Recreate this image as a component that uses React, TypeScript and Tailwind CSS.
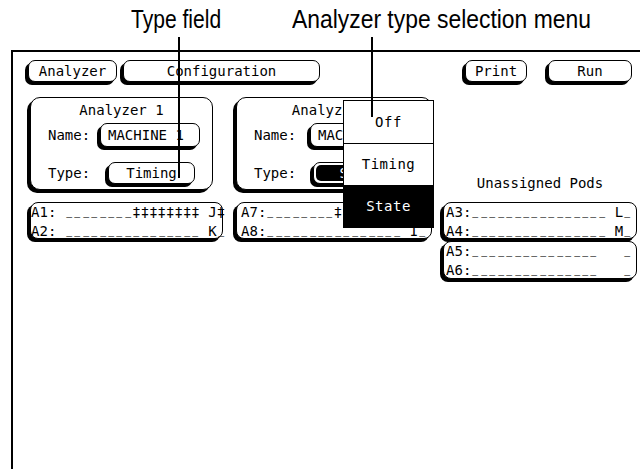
const shell = "border border-black bg-white shadow-[-3px_3px_0_0_#000]";

// underscores on the instrument font are short dashes sitting on the baseline
function Dashed({ text }: { text: string }) {
  return (
    <>
      {text.split("").map((c, i) =>
        c === "_" ? (
          <span key={i} className="inline-block scale-x-[0.7] -translate-y-[3px]">
            _
          </span>
        ) : (
          <span key={i}>{c}</span>
        )
      )}
    </>
  );
}

function Btn({ label, className }: { label: string; className: string }) {
  return (
    <div className={`${shell} rounded-[7px] h-[22px] flex items-center justify-center ${className}`}>
      {label}
    </div>
  );
}

function PodBox({ rows, className }: { rows: string[]; className: string }) {
  return (
    <div className={`${shell} rounded-[8px] leading-[19px] whitespace-pre ${className}`}>
      {rows.map((r) => (
        <div key={r}>
          <Dashed text={r} />
        </div>
      ))}
    </div>
  );
}

function AnalyzerBox({
  title,
  name,
  type,
  selected,
  className,
  nameW,
  typeW,
  nameGap,
  typeGap,
}: {
  title: string;
  name: string;
  type: string;
  selected?: boolean;
  className: string;
  nameW: string;
  typeW: string;
  nameGap: string;
  typeGap: string;
}) {
  return (
    <div className={`${shell} rounded-[10px] h-[93px] pt-[4px] ${className}`}>
      <div className="text-center leading-[16px]">{title}</div>
      <div className="flex items-center mt-[5px] pl-[17px]">
        <span className={nameGap}>Name:</span>
        <div className={`${shell} rounded-[7px] h-[24px] flex items-center pl-[7px] ${nameW}`}>{name}</div>
      </div>
      <div className="flex items-center mt-[15px] pl-[17px]">
        <span className={typeGap}>Type:</span>
        {selected ? (
          <div className={`${shell} rounded-[7px] h-[22px] p-[2px] ${typeW}`}>
            <div className="h-full bg-black text-white rounded-[5px] flex items-center justify-center">{type}</div>
          </div>
        ) : (
          <div className={`${shell} rounded-[7px] h-[22px] flex items-center justify-center ${typeW}`}>{type}</div>
        )}
      </div>
    </div>
  );
}

export default function App() {
  return (
    <div className="relative w-[640px] h-[469px] overflow-hidden bg-white text-black">
      {/* callout captions */}
      <div className="h-[50px] flex items-start pt-[6px] text-[26px] leading-none whitespace-nowrap font-['Liberation_Sans',Arial,sans-serif]">
        <div className="ml-[131px] w-[161px]">
          <span className="inline-block origin-left scale-x-[0.81]">Type field</span>
        </div>
        <div>
          <span className="inline-block origin-left scale-x-[0.88]">Analyzer type selection menu</span>
        </div>
      </div>

      {/* instrument screen */}
      <div className="ml-[11px] h-[419px] border-l-2 border-t-2 border-black text-[14px] font-['DejaVu_Sans_Mono',monospace]">
        <div className="flex pt-[8px]">
          <Btn label="Analyzer" className="ml-[15px] w-[89px]" />
          <Btn label="Configuration" className="ml-[6px] w-[197px]" />
          <Btn label="Print" className="ml-[145px] w-[62px]" />
          <Btn label="Run" className="ml-[21px] w-[84px]" />
        </div>

        <div className="flex mt-[15px]">
          <AnalyzerBox
            title="Analyzer 1"
            name="MACHINE 1"
            type="Timing"
            className="ml-[17px] w-[183px]"
            nameW="w-[100px]"
            typeW="w-[87px]"
            nameGap="w-[52px]"
            typeGap="w-[60px]"
          />
          <AnalyzerBox
            title="Analyzer 2"
            name="MACHINE 2"
            type="State"
            selected
            className="ml-[23px] w-[196px]"
            nameW="w-[110px]"
            typeW="w-[95px]"
            nameGap="w-[56px]"
            typeGap="w-[59px]"
          />
          <div className="ml-[11px] w-[194px] self-end text-center leading-[16px] mb-[-1px]">Unassigned Pods</div>
        </div>

        <div className="flex items-start mt-[12px]">
          <PodBox
            rows={["A1: ________‡‡‡‡‡‡‡‡ J‡", "A2: ________________ K_"]}
            className="ml-[17px] w-[193px] h-[37px]"
          />
          <PodBox
            rows={["A7:________‡‡‡‡‡‡‡‡ I‡", "A8:________________ I_"]}
            className="ml-[13px] w-[196px] h-[37px] pl-[4px]"
          />
          <div className="ml-[11px] w-[194px] flex flex-col gap-[2px]">
            <PodBox rows={["A3:________________ L_", "A4:________________ M_"]} className="h-[37px] pl-[2px]" />
            <PodBox rows={["A5:_______________   _", "A6:_______________   _"]} className="h-[38px] pl-[2px]" />
          </div>
        </div>
      </div>

      {/* type selection pop-up */}
      <div className="absolute left-[343px] top-[100px] w-[91px] border border-black bg-white flex flex-col text-[14px] tracking-[0.5px] font-['DejaVu_Sans_Mono',monospace]">
        <div className="h-[42px] flex items-center justify-center">Off</div>
        <div className="h-[42px] border-t border-black flex items-center justify-center">Timing</div>
        <div className="h-[42px] bg-black text-white flex items-center justify-center">State</div>
      </div>

      {/* callout leader lines */}
      <div className="absolute left-[178px] top-[37px] w-[2px] h-[141px] bg-black" />
      <div className="absolute left-[371px] top-[37px] w-[2px] h-[80px] bg-black" />
    </div>
  );
}
